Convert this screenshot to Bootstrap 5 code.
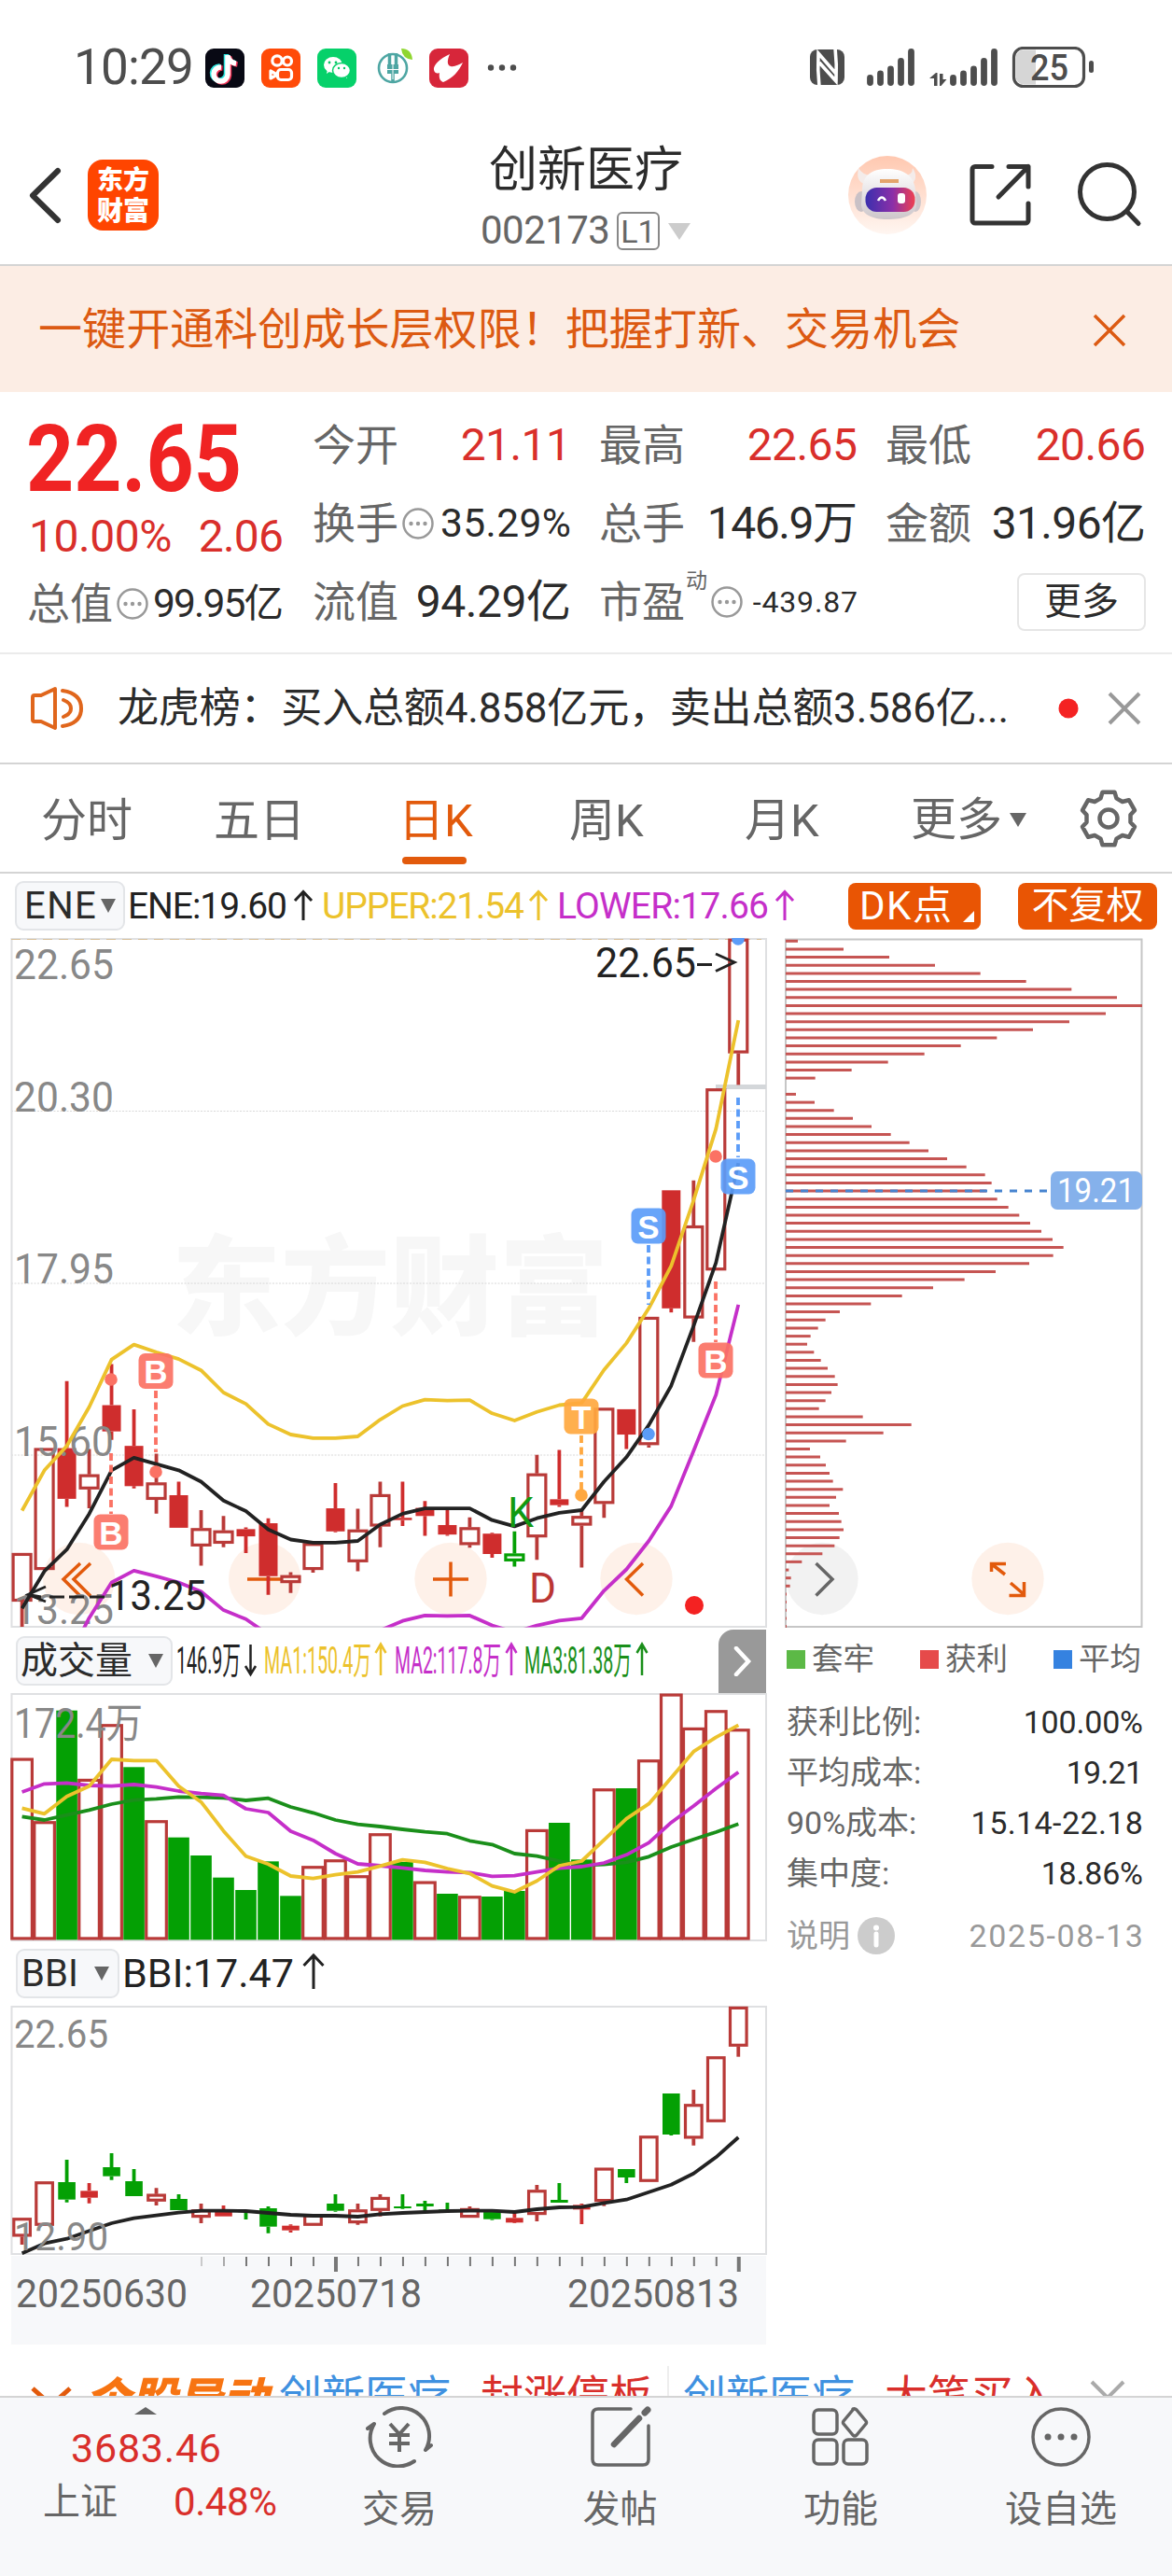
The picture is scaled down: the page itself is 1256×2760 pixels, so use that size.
<!DOCTYPE html>
<html lang="zh-CN">
  <head>
    <meta charset="UTF-8" />
    <meta name="viewport" content="width=device-width, initial-scale=1" />
    <title>创新医疗 002173</title>
    <link
      href="https://cdn.jsdelivr.net/npm/bootstrap@5.3.0/dist/css/bootstrap.min.css"
      rel="stylesheet"
    />
    <style>
      body {
        width: 1256px;
        height: 2760px;
        overflow: hidden;
        background: #fff;
        color: #2b2b2b;
        font-family: Roboto, "Noto Sans CJK SC", sans-serif;
      }
      svg { display: block; flex: none; }
      svg text { font-family: Roboto, "Noto Sans CJK SC", sans-serif; }
      [data-w] { display: inline-block; white-space: nowrap; }
      .gray { color: #666; }
      .up { color: #d92f2b; }

      .statusbar { height: 134px; padding: 12px 84px 0 79px; color: #4d4d4d; }
      .status-apps { margin-right: 312px; }
      .clock { font-size: 53px; }

      .topbar { height: 151px; border-bottom: 2px solid #d4d4d4; }
      .topbar-side { width: 400px; }
      .brand-logo {
        width: 76px; height: 76px; border-radius: 16px; background: #ff4500; color: #fff;
        font: 900 28px/33px "Noto Sans CJK SC", sans-serif; padding-top: 4px;
      }
      .stock-name { font-size: 52px; line-height: 60px; padding-top: 3px; }
      .stock-code { font-size: 42px; line-height: 40px; margin-top: 14px; }
      .level-box {
        width: 46px; height: 41px; border: 2px solid #888; border-radius: 6px;
        font-size: 34px; line-height: 38px; margin-left: 7px;
      }

      .promo { height: 135px; background: #fcede4; color: #dc5a12; padding: 2px 49px 0 41px; font-size: 47px; }

      .quote { height: 281px; border-bottom: 2px solid #ebebeb; padding: 15px 28px 0 29px; }
      .quote-left { width: 276px; margin-right: 31px; }
      .change { font-size: 48px; line-height: 60px; margin-top: 10px; padding-left: 2px; }
      .quote-grid { display: grid; grid-template-columns: 277px 277px 279px; column-gap: 30px; grid-auto-rows: 84px; width: 894px; }
      .cell { display: flex; align-items: center; height: 84px; font-size: 48px; white-space: nowrap; }
      .cell b { font-weight: 400; font-size: 46px; color: #666; }
      .cell span { margin-left: auto; }
      .cell .mid { font-size: 42.5px; }
      .cell .tiny { font-size: 32px; }
      .cell .sup { font-size: 23px; line-height: 40px; margin-left: 1px; }
      .more-btn { width: 138px; height: 62px; border: 2px solid #e6e6e6; border-radius: 8px; font-size: 40px; line-height: 58px; }

      .notice { height: 118px; border-bottom: 2px solid #d4d4d4; padding: 0 32px 0 33px; font-size: 44px; }

      .period-tabs { height: 117px; border-bottom: 2px solid #d4d4d4; color: #666; font-size: 49px; }
      .period-tabs div { padding-top: 3px; line-height: 116px; height: 116px; white-space: nowrap; }
      .period-tabs .current { color: #e25a0c; position: relative; }
      .period-tabs .current::after {
        content: ""; position: absolute; left: 4px; top: 99px; width: 69px; height: 8px; border-radius: 4px; background: #e25a0c;
      }

      .ind-row { height: 69px; padding-left: 16px; }
      .sub-row { height: 69px; padding-left: 17px; }
      .pill {
        height: 53px; border: 2px solid #e3e5e8; border-radius: 9px; background: #f7f8fa;
        font-size: 40px; line-height: 49px; flex: none;
      }
      .fill-btn { height: 50px; border-radius: 8px; background: #e95504; color: #fff; font-size: 40px; line-height: 49px; }
      .kline-col { width: 823px; }
      .cost-col { width: 433px; }
      .next-panel { width: 51px; height: 68px; border-radius: 16px 0 0 0; background: #999; }
      .legend-row { padding: 10px 33px 0 20px; font-size: 33.5px; height: 74px; }
      .legend-row div { height: 46px; }
      .legend-row i { width: 20px; height: 20px; margin-right: 7px; }
      .cost-row { height: 54px; padding: 0 31px 2px 20px; font-size: 34px; }

      .ticker { height: 55px; padding-left: 33px; overflow: hidden; font-size: 46px; line-height: 110px; white-space: nowrap; }
      .ticker-tag { font: italic 900 49px/110px "Noto Sans CJK SC", sans-serif; color: #f77412; }
      .ticker-split { width: 2px; height: 40px; margin-top: 23px; background: #eee; }

      .bottombar { height: 193px; border-top: 2px solid #d4d4d4; background: #f7f8fa; color: #666; font-size: 40px; }
      .index-box { width: 342px; }
      .nav-col { line-height: 50px; flex: none; }
      .nav-col svg { margin: 9px auto 20px; }
    </style>
  </head>
  <body>
    <!-- phone status bar -->
    <div class="statusbar d-flex align-items-center">
      <div class="clock" data-w="125">10:29</div>
      <svg class="ms-auto status-apps" width="336" height="46" viewBox="218 50 336 46">
        <rect x="220" y="52" width="42" height="42" rx="9" fill="#080914" />
        <g fill="none" stroke-width="5.5">
          <path d="M244 59V80a7.5 7.5 0 1 1-7-8M244 60q2 7 9 8" stroke="#2ee5df" transform="translate(-1.5 -1)" />
          <path d="M244 59V80a7.5 7.5 0 1 1-7-8M244 60q2 7 9 8" stroke="#f5365a" transform="translate(1.5 1)" />
          <path d="M244 59V80a7.5 7.5 0 1 1-7-8M244 60q2 7 9 8" stroke="#fff" />
        </g>
        <rect x="280" y="52" width="42" height="42" rx="9" fill="#ff4a08" />
        <g fill="none" stroke="#fff" stroke-width="3.2" stroke-linejoin="round">
          <circle cx="297" cy="65" r="5.2" /><circle cx="308" cy="65.5" r="4.5" />
          <rect x="297.5" y="74.5" width="15" height="11" rx="3.5" />
          <path d="M297 80l-7-4v8z" />
        </g>
        <rect x="340" y="52" width="42" height="42" rx="9" fill="#06d16a" />
        <path d="M350 79l1-5h6zM372 84l-1-5h-6z" fill="#fff" />
        <ellipse cx="357" cy="69.5" rx="10" ry="8.5" fill="#fff" />
        <ellipse cx="366" cy="75.5" rx="9.5" ry="8" fill="#fff" stroke="#06d16a" stroke-width="1.5" />
        <g fill="#06c765"><circle cx="353" cy="67" r="1.4" /><circle cx="360" cy="67" r="1.4" /><circle cx="363" cy="73" r="1.2" /><circle cx="369" cy="73" r="1.2" /></g>
        <circle cx="421" cy="73" r="15" fill="none" stroke="#4ea6a3" stroke-width="2.6" />
        <path d="M417.500 57V69M424.500 57V69M421 69V89" fill="none" stroke="#4ea6a3" stroke-width="3.5" />
        <path d="M415 69h12v10H415zM415 74h12" fill="#4ea6a3" />
        <path d="M421 64V85M415 74.500h12" stroke="#fff" stroke-width="1" />
        <path d="M430 52q11 0 12 12q-11-1-12-12z" fill="#8fd62f" />
        <rect x="460" y="52" width="42" height="42" rx="9" fill="#d7263a" />
        <path d="M482 58C471 63 464 70 465 75c1 4 4 4 6 3-1 6 1 9 4 10 10-4 17-12 21-21-4 2-9 5-13 4-4-1-4-6-1-13z" fill="#fff" />
        <g fill="#4d4d4d"><circle cx="526" cy="72.5" r="3.2" /><circle cx="538" cy="72.5" r="3.2" /><circle cx="550" cy="72.5" r="3.2" /></g>
      </svg>
      <svg width="306" height="46" viewBox="866 50 306 46" fill="#4d4d4d">
        <rect x="868" y="53" width="37" height="38" rx="8" />
        <path d="M878 93q-2-18-1-36l19 22M895 51q2 18 1 36l-18-20" fill="none" stroke="#fff" stroke-width="3.6" />
        <g stroke="#4d4d4d" stroke-width="6.8" stroke-linecap="round">
          <path d="M932.500 83.500V88.500M943.500 79V88.500M954.500 74V88.500M965.500 65.500V88.500M976.500 55.500V88.500" />
          <path d="M1021.500 83.500V88.500M1032.500 79V88.500M1043.500 74V88.500M1054.500 65.500V88.500M1065.500 55.500V88.500" />
        </g>
        <path d="M1001 92V84h-5l7-6h1.500V92zM1007 79h3.500v6h4l-6 7H1007z" />
        <rect x="1086.5" y="51.5" width="75" height="41" rx="10" fill="#fff" stroke="#4d4d4d" stroke-width="3.2" />
        <path d="M1110 53.500h-13a8.500 8.500 0 0 0-8.500 8.500v20a8.500 8.500 0 0 0 8.500 8.500h13z" fill="#d6d6d6" />
        <rect x="1167" y="65" width="5" height="13" rx="2.5" />
        <text x="1104" y="86" font-size="38" font-weight="500" textLength="41" lengthAdjust="spacingAndGlyphs">25</text>
      </svg>
    </div>

    <!-- title bar -->
    <div class="topbar d-flex">
      <div class="topbar-side d-flex align-items-center">
        <svg width="94" height="70" viewBox="0 174 94 70"><path d="M62 183L35 209.500L62 236" fill="none" stroke="#333" stroke-width="6" stroke-linecap="round" stroke-linejoin="round" /></svg>
        <div class="brand-logo text-center">东方<br />财富</div>
      </div>
      <div class="flex-fill text-center pt-3">
        <div class="stock-name">创新医疗</div>
        <div class="stock-code gray d-flex justify-content-center">
          <span data-w="136">002173</span>
          <div class="level-box">L1</div>
          <svg width="26" height="18" class="align-self-center ms-2"><path d="M1 0H25L13 18z" fill="#ccc" /></svg>
        </div>
      </div>
      <div class="topbar-side d-flex align-items-center">
        <svg width="400" height="100" viewBox="856 159 400 100">
          <defs>
            <linearGradient id="halo" x1="0" y1="0" x2="0" y2="1"><stop offset="0" stop-color="#ffc8b0" /><stop offset="1" stop-color="#fff6f1" /></linearGradient>
            <linearGradient id="visor"><stop offset="0" stop-color="#3a2fae" /><stop offset=".55" stop-color="#8b2fa8" /><stop offset="1" stop-color="#ef4050" /></linearGradient>
            <linearGradient id="shell" x1="0" y1="0" x2="0" y2="1"><stop offset="0" stop-color="#fff" /><stop offset="1" stop-color="#cdc6ca" /></linearGradient>
          </defs>
          <circle cx="951" cy="209" r="42" fill="url(#halo)" />
          <path d="M931 198q-15-1-11-18q4 7 13 8zM969 188q9 0 9-8q8 12-4 20z" fill="#f4ecea" />
          <ellipse cx="923" cy="216" rx="7" ry="11" fill="#c9c1c6" /><ellipse cx="981" cy="216" rx="6" ry="11" fill="#cec7cb" />
          <path d="M924 204c0-16 10-23 27-23s29 7 30 23l1 15c0 12-14 16-31 16s-28-6-28-16z" fill="url(#shell)" />
          <rect x="927.5" y="201" width="53" height="26" rx="12" fill="url(#visor)" />
          <path d="M941 215q4-7 8 0" fill="none" stroke="#fff" stroke-width="2.5" />
          <rect x="962" y="207" width="8" height="11" rx="3" fill="#fff" />
          <path d="M943 194h20" stroke="#e3a46c" stroke-width="4" />
          <g fill="none" stroke="#333" stroke-width="5" stroke-linecap="round" stroke-linejoin="round">
            <path d="M1063 178.500H1045a3 3 0 0 0-3 3V236a3 3 0 0 0 3 3H1099a3 3 0 0 0 3-3V218M1081 178.500H1102V200M1102 178.500L1070 211" />
            <circle cx="1186.5" cy="205.5" r="29" /><path d="M1208 227L1220 239.500" />
          </g>
        </svg>
      </div>
    </div>

    <div class="promo d-flex align-items-center justify-content-between">
      <span data-w="985">一键开通科创成长层权限！把握打新、交易机会</span>
      <svg width="36" height="36"><path d="M2 2L34 34M34 2L2 34" stroke="#dc5a12" stroke-width="3.5" /></svg>
    </div>

    <!-- quote summary -->
    <div class="quote d-flex">
      <div class="quote-left">
        <svg width="240" height="100" viewBox="29 435 240 100">
          <text x="28" y="526" font-size="100" font-weight="700" fill="#f02323" textLength="231" lengthAdjust="spacingAndGlyphs">22.65</text>
        </svg>
        <div class="change up d-flex justify-content-between"><span data-w="150">10.00%</span><span data-w="88">2.06</span></div>
        <div class="cell">
          <b>总值</b>
          <svg class="ms-1" width="34" height="34"><use href="#dots" /></svg>
          <span class="mid" data-w="137">99.95亿</span>
        </div>
      </div>
      <div class="quote-grid">
        <div class="cell"><b>今开</b><span class="up" data-w="115">21.11</span></div>
        <div class="cell"><b>最高</b><span class="up" data-w="115">22.65</span></div>
        <div class="cell"><b>最低</b><span class="up" data-w="115">20.66</span></div>
        <div class="cell">
          <b>换手</b>
          <svg class="ms-1" width="34" height="34" id="dots"><g fill="#999"><circle cx="17" cy="17" r="15.5" fill="none" stroke="#999" stroke-width="2.5" /><circle cx="9.5" cy="17" r="2.2" /><circle cx="17" cy="17" r="2.2" /><circle cx="24.5" cy="17" r="2.2" /></g></svg>
          <span class="mid" data-w="137">35.29%</span>
        </div>
        <div class="cell"><b>总手</b><span data-w="158">146.9万</span></div>
        <div class="cell"><b>金额</b><span data-w="162">31.96亿</span></div>
        <div class="cell"><b>流值</b><span data-w="163">94.29亿</span></div>
        <div class="cell">
          <b>市盈</b>
          <div class="sup gray align-self-start">动</div>
          <svg class="ms-1" width="34" height="34"><use href="#dots" /></svg>
          <span class="tiny" data-w="110">-439.87</span>
        </div>
        <div class="cell justify-content-end"><div class="more-btn text-center">更多</div></div>
      </div>
    </div>

    <div class="notice d-flex align-items-center">
      <svg width="58" height="48" viewBox="33 735 58 48" fill="none" stroke="#e0661c" stroke-width="4" stroke-linecap="round" stroke-linejoin="round">
        <path d="M35 747V771q0 2 2 2h7L59 780V738L44 745H37q-2 0-2 2zM67 740q20 3 20 19t-20 19M68 750q8 3 8 9t-8 9" />
      </svg>
      <span data-w="952" style="margin-left: 35px">龙虎榜：买入总额4.858亿元，卖出总额3.586亿...</span>
      <svg class="ms-auto" width="90" height="40" viewBox="1134 739 90 40">
        <circle cx="1145" cy="759" r="10.5" fill="#f42222" />
        <path d="M1189 743L1221 775M1221 743L1189 775" stroke="#999" stroke-width="4" />
      </svg>
    </div>

    <!-- period tabs -->
    <div class="period-tabs d-flex">
      <div style="margin-left: 44px; width: 185px">分时</div>
      <div style="width: 198px">五日</div>
      <div class="current" style="width: 183px">日K</div>
      <div style="width: 188px">周K</div>
      <div style="width: 178px">月K</div>
      <div class="d-flex align-items-center">更多<svg class="ms-2" width="18" height="15"><path d="M0 0H18L9 15z" fill="#666" /></svg></div>
      <svg class="align-self-center" style="margin-left: 56px" width="64" height="64" viewBox="-32 -32 64 64" fill="none" stroke="#666" stroke-width="4.5" stroke-linejoin="round">
        <path d="M-6.500-28.300L6.500-28.300L8.500-21.600L14.800-18L21.800-19.800L28-8.800L23.500-4L23.500 4L28 8.800L21.800 19.800L14.800 18L8.500 21.600L6.500 28.300L-6.500 28.300L-8.500 21.600L-14.800 18L-21.800 19.800L-28 8.800L-23.500 4L-23.500-4L-28-8.800L-21.800-19.800L-14.800-18L-8.500-21.600z" />
        <circle r="9.5" />
      </svg>
    </div>

    <!-- ENE indicator -->
    <div class="ind-row d-flex align-items-center">
      <div class="pill d-flex align-items-center" style="width: 118px; padding-left: 8px">
        <span data-w="74">ENE</span>
        <svg style="margin-left: 5px" width="16" height="15"><path d="M0 0H16L8 15z" fill="#666" /></svg>
      </div>
      <svg width="730" height="53" viewBox="134 944 730 53" font-size="39">
        <text x="137" y="984" fill="#222" textLength="171">ENE:19.60</text>
        <text x="345" y="984" fill="#ecc22c" textLength="217">UPPER:21.54</text>
        <text x="597" y="984" fill="#c52fc9" textLength="227">LOWER:17.66</text>
        <g fill="none" stroke-width="3">
          <path d="M325 986V956M316 965L325 955.500L334 965" stroke="#222" />
          <path d="M577 986V956M568 965L577 955.500L586 965" stroke="#ecc22c" />
          <path d="M841 986V956M832 965L841 955.500L850 965" stroke="#c52fc9" />
        </g>
      </svg>
      <div class="fill-btn d-flex" style="margin-left: 45px; width: 142px; padding-left: 12px">
        <span data-w="96" style="font-size: 42px">DK点</span>
        <svg class="mt-auto mb-2 ms-auto" style="margin-right: 7px" width="12" height="12"><path d="M12 0V12H0z" fill="#fff" /></svg>
      </div>
      <div class="fill-btn text-center" style="margin-left: 40px; width: 149px">不复权</div>
    </div>

    <div class="d-flex">
      <div class="kline-col">
        <svg id="kline" width="822" height="740" viewBox="0 1005 822 740"></svg>

        <div class="sub-row d-flex align-items-center">
          <div class="pill d-flex align-items-center" style="width: 168px; padding-left: 3px">
            <span>成交量</span>
            <svg style="margin-left: 17px" width="16" height="15"><path d="M0 0H16L8 15z" fill="#666" /></svg>
          </div>
          <svg width="585" height="53" viewBox="185 1753 585 53" font-size="40">
            <text x="189" y="1793" fill="#222" textLength="69" lengthAdjust="spacingAndGlyphs">146.9万</text>
            <text x="283" y="1793" fill="#ecc22c" textLength="115" lengthAdjust="spacingAndGlyphs">MA1:150.4万</text>
            <text x="423" y="1793" fill="#c52fc9" textLength="114" lengthAdjust="spacingAndGlyphs">MA2:117.8万</text>
            <text x="562" y="1793" fill="#1a8f1a" textLength="115" lengthAdjust="spacingAndGlyphs">MA3:81.38万</text>
            <g fill="none" stroke-width="2.5">
              <path d="M268.500 1762V1794M263 1785L268.500 1794L274 1785" stroke="#222" />
              <path d="M408 1795V1762M402.500 1771L408 1761.500L413.500 1771" stroke="#ecc22c" />
              <path d="M548 1795V1762M542.500 1771L548 1761.500L553.500 1771" stroke="#c52fc9" />
              <path d="M688 1795V1762M682.500 1771L688 1761.500L693.500 1771" stroke="#1a8f1a" />
            </g>
          </svg>
          <div class="next-panel d-flex justify-content-center align-items-center">
            <svg width="20" height="32"><path d="M3 2L16 16L3 30" fill="none" stroke="#fff" stroke-width="4.5" stroke-linecap="round" /></svg>
          </div>
        </div>

        <svg id="volume" width="822" height="266" viewBox="0 1814 822 266"></svg>

        <div class="sub-row d-flex align-items-center">
          <div class="pill d-flex align-items-center" style="width: 111px; padding-left: 4px">
            <span data-w="58">BBI</span>
            <svg style="margin-left: 17px" width="16" height="15"><path d="M0 0H16L8 15z" fill="#666" /></svg>
          </div>
          <svg width="300" height="53" viewBox="128 2089 300 53">
            <text x="131" y="2130" font-size="42" fill="#222" textLength="184" lengthAdjust="spacingAndGlyphs">BBI:17.47</text>
            <path d="M336 2132V2097M325.500 2107L336 2096L346.500 2107" fill="none" stroke="#222" stroke-width="3" />
          </svg>
        </div>

        <svg id="bbi" width="822" height="363" viewBox="0 2149 822 363"></svg>
      </div>

      <!-- cost distribution -->
      <div class="cost-col">
        <svg id="cost" width="433" height="740" viewBox="823 1005 433 740"></svg>
        <div class="legend-row gray d-flex justify-content-between">
          <div class="d-flex align-items-center"><i style="background: #5cb946"></i>套牢</div>
          <div class="d-flex align-items-center"><i style="background: #e64a4a"></i>获利</div>
          <div class="d-flex align-items-center"><i style="background: #3582e0"></i>平均</div>
        </div>
        <div class="cost-row d-flex align-items-center justify-content-between"><span class="gray">获利比例:</span><span data-w="126">100.00%</span></div>
        <div class="cost-row d-flex align-items-center justify-content-between"><span class="gray">平均成本:</span><span data-w="80">19.21</span></div>
        <div class="cost-row d-flex align-items-center justify-content-between"><span class="gray">90%成本:</span><span data-w="182">15.14-22.18</span></div>
        <div class="cost-row d-flex align-items-center justify-content-between"><span class="gray">集中度:</span><span data-w="107">18.86%</span></div>
        <div class="cost-row d-flex align-items-center" style="margin-top: 13px; color: #999">
          <span>说明</span>
          <svg class="ms-2" width="40" height="40"><circle cx="20" cy="20" r="20" fill="#ccc" /><circle cx="20" cy="11.5" r="3" fill="#fff" /><path d="M20 18V30" stroke="#fff" stroke-width="5" stroke-linecap="round" /></svg>
          <span class="ms-auto" data-w="184">2025-08-13</span>
        </div>
      </div>
    </div>

    <!-- event ticker, cut off by the bottom bar -->
    <div class="ticker d-flex">
      <svg style="margin-top: 45px" width="44" height="40"><path d="M2 2L22 20L42 2" fill="none" stroke="#e25a0c" stroke-width="5" /></svg>
      <span class="ticker-tag" style="margin-left: 14px">个股异动</span>
      <span style="margin-left: 12px; color: #3f91e0">创新医疗</span>
      <span class="up" style="margin-left: 32px">封涨停板</span>
      <div class="ticker-split" style="margin-left: 16px"></div>
      <span style="margin-left: 15px; color: #3f91e0">创新医疗</span>
      <span class="up" style="margin-left: 32px">大笔买入</span>
      <svg style="margin: 38px 0 0 36px" width="38" height="38"><path d="M2 2L36 36M36 2L2 36" stroke="#aaa" stroke-width="4" /></svg>
    </div>

    <div class="bottombar d-flex">
      <div class="index-box">
        <svg style="margin: 10px 0 0 144px" width="24" height="8"><path d="M0 8L12 0L24 8z" fill="#666" /></svg>
        <div class="up" style="font-size: 43px; line-height: 50px; margin: 11px 0 0 76px"><span data-w="158">3683.46</span></div>
        <div class="d-flex" style="margin: 8px 0 0 46px; line-height: 50px">
          <span>上证</span><span class="up" style="margin-left: 60px; font-size: 42px" data-w="108">0.48%</span>
        </div>
      </div>
      <div class="nav-col text-center" style="width: 172px">
        <svg width="76" height="66" viewBox="-38 -33 76 66" fill="none" stroke="#666" stroke-width="4" stroke-linecap="round" stroke-linejoin="round">
          <path d="M-16-25A30 30 0 0 1 28 14L34 9M16 26A30 30 0 0 1-27-14L-34-9" />
          <path d="M-10-14L0-3L10-14M-11-2H11M-11 7H11M0-3V16" stroke-linecap="butt" />
        </svg>
        交易
      </div>
      <div class="nav-col text-center" style="width: 301px">
        <svg width="66" height="66" viewBox="-33 -33 66 66" fill="none" stroke="#666" stroke-width="3.5" stroke-linecap="round">
          <path d="M11-30H-24q-6 0-6 6V24q0 6 6 6H24q6 0 6-6V-12" />
          <path d="M-7 8L20-20" stroke-width="6.5" /><path d="M26-26L29-29" stroke-width="7" />
        </svg>
        发帖
      </div>
      <div class="nav-col text-center" style="width: 172px">
        <svg width="66" height="66" viewBox="-33 -33 66 66" fill="none" stroke="#666" stroke-width="3.5" stroke-linejoin="round">
          <rect x="-29" y="-29" width="25" height="26" rx="5" /><rect x="-29" y="3" width="25" height="26" rx="5" /><rect x="3" y="3" width="25" height="26" rx="5" />
          <path d="M14-30q2-1 4 1l10 12q1 2 0 3l-10 12q-2 2-4 0l-10-12q-1-1 0-3l10-12z" transform="translate(-1 0)" />
        </svg>
        功能
      </div>
      <div class="nav-col text-center ms-auto" style="width: 238px">
        <svg width="66" height="66" viewBox="-33 -33 66 66" fill="#666">
          <circle r="30" fill="none" stroke="#666" stroke-width="3.5" /><circle cx="-14" r="3.5" /><circle r="3.5" /><circle cx="14" r="3.5" />
        </svg>
        设自选
      </div>
    </div>

    <script>
      const RED = "#b93a38", FILL = "#cf2d2d", GREEN = "#04a004";
      const STEP = 23.99, X0 = 23.6;
      const cx = (i) => X0 + i * STEP;
      const line = (values, y, color, width = 3.8) =>
        `<polyline fill="none" stroke="${color}" stroke-width="${width}" stroke-linejoin="round" points="${values
          .map((v, i) => cx(i).toFixed(1) + "," + y(v).toFixed(1))
          .join(" ")}"/>`;
      const label = (x, y, s, w, color = "#888", size = 44) =>
        `<text x="${x}" y="${y}" fill="${color}" font-size="${size}" textLength="${w}" lengthAdjust="spacingAndGlyphs">${s}</text>`;

      // rows are [kind, bodyTop, bodyBottom, wickTop, wickBottom]; h = hollow, r = red, g = green, k = hollow green
      function candles(rows, y, half) {
        return rows
          .map(([kind, a, b, hi = a, lo = b], i) => {
            const x = cx(i);
            const color = kind === "g" || kind === "k" ? GREEN : kind === "r" ? FILL : RED;
            const hollow = kind === "h" || kind === "k";
            const top = y(a), h = Math.max(y(b) - top, 2);
            const wick = `<path d="M${x} ${y(hi)}V${top}M${x} ${top + h}V${y(lo)}" stroke="${color}" stroke-width="3.8"/>`;
            const body = hollow
              ? `<rect x="${x - half + 1.5}" y="${top + 1.4}" width="${half * 2 - 3}" height="${Math.max(h - 2.8, 1)}" fill="none" stroke="${color}" stroke-width="3.2"/>`
              : `<rect x="${x - half + 1}" y="${top}" width="${half * 2 - 2}" height="${h}" fill="${color}"/>`;
            return wick + body;
          })
          .join("");
      }

      // main K line
      const ky = (v) => 1000 + v * 0.4847;
      const days = [
        ["h", 1370, 1477, 1370, 1533], ["h", 1138, 1407], ["r", 1138, 1250, 990, 1268], ["h", 1196, 1229, 1140, 1271],
        ["r", 1043, 1101, 952, 1120], ["r", 1133, 1222, 1052, 1227], ["h", 1214, 1252, 1150, 1283], ["r", 1242, 1314, 1212, 1314],
        ["h", 1315, 1355, 1275, 1398], ["h", 1320, 1349, 1288, 1357], ["r", 1317, 1333, 1313, 1370], ["r", 1304, 1421, 1293, 1462],
        ["h", 1419, 1436, 1412, 1458], ["h", 1348, 1407, 1343, 1413], ["r", 1271, 1322, 1215, 1324], ["h", 1318, 1390, 1272, 1410],
        ["h", 1240, 1311, 1212, 1357], ["r", 1292, 1297, 1212, 1310], ["r", 1270, 1288, 1255, 1332], ["r", 1308, 1329, 1272, 1332],
        ["h", 1313, 1352, 1291, 1358], ["r", 1327, 1372, 1325, 1380], ["k", 1371, 1388, 1322, 1400], ["h", 1194, 1335, 1153, 1385],
        ["r", 1251, 1264, 1142, 1268], ["h", 1288, 1309, 1275, 1402], ["h", 1049, 1261, 1049, 1292], ["r", 1052, 1108, 1052, 1140],
        ["h", 848, 1131, 848, 1137], ["r", 568, 829, 568, 838], ["h", 646, 851, 546, 903], ["h", 343, 745], ["h", 12, 265, 12, 335],
      ];
      const ene = [1492, 1410, 1362, 1283, 1187, 1159, 1173, 1187, 1212, 1254, 1277, 1318, 1340, 1347, 1347, 1343, 1307, 1283, 1271, 1271, 1271, 1297, 1311, 1293, 1281, 1275, 1212, 1158, 1087, 1000, 868, 728, 508];
      const upper = [1276, 1187, 1133, 1047, 942, 909, 926, 941, 966, 1015, 1040, 1085, 1108, 1116, 1116, 1112, 1075, 1045, 1031, 1033, 1032, 1061, 1077, 1058, 1043, 1038, 965, 906, 829, 735, 590, 432, 192];
      const lower = [1740, 1660, 1610, 1513, 1435, 1409, 1421, 1435, 1455, 1496, 1516, 1550, 1570, 1580, 1580, 1575, 1541, 1520, 1508, 1509, 1508, 1530, 1545, 1530, 1519, 1514, 1453, 1406, 1343, 1266, 1144, 1020, 821];

      const dash = (x, a, b, color) => `<path d="M${x} ${a}V${b}" stroke="${color}" stroke-width="3.8" stroke-dasharray="8 4.500"/>`;
      const dot = (x, y, color, r = 6.8) => `<circle cx="${x}" cy="${y}" r="${r}" fill="${color}"/>`;
      const mark = (x, y, s, color) =>
        `<rect x="${x - 18.5}" y="${y - 19}" width="37" height="38" rx="7" fill="${color}" fill-opacity=".92"/>` +
        `<text x="${x}" y="${y + 13}" text-anchor="middle" font-size="35" font-weight="700" fill="#fff" style="font-family:'Liberation Sans'">${s}</text>`;
      const round = (x, icon, bg = "#feede3", color = "#e25a0c") =>
        `<circle cx="${x}" cy="1691.500" r="38.700" fill="${bg}" fill-opacity=".8"/><path d="${icon}" fill="none" stroke="${color}" stroke-width="3.500"/>`;
      const CORAL = "#fb7264", BLUE = "#5b9cf8", AMBER = "#ffa83f";

      document.getElementById("kline").innerHTML =
        `<text x="184" y="1421" font-size="116" font-weight="900" fill="#f7f7f7" textLength="468" lengthAdjust="spacingAndGlyphs">东方财富</text>
        <path d="M12 1190.500H821M12 1375H821M12 1559H821" stroke="#d8d8d8" stroke-dasharray="2 1.500"/>
        <rect x="12.500" y="1006" width="808.500" height="737" fill="none" stroke="#dfe0e2" stroke-width="2"/>
        <path d="M12 1006.500H816" stroke="#d8c09a" stroke-dasharray="10 7"/>` +
        round(84.6, "M86 1675L68 1692L86 1710M97 1675L79 1692L97 1710") +
        round(283.7, "M265 1692H303") +
        round(483, "M464 1692H502M483 1673.500V1710.500") +
        round(682, "M689 1675L671.500 1692L689 1709.500") +
        `<path d="M767 1164.500H821" stroke="#d4d7da" stroke-width="5"/>
        <clipPath id="plot"><rect x="12" y="1005" width="810" height="738.500"/></clipPath><g clip-path="url(#plot)">` +
        candles(days, ky, 11) +
        label(15, 1049, "22.65", 107) + label(15, 1191, "20.30", 107) + label(15, 1375, "17.95", 107) + label(15, 1560, "15.60", 107) + label(15, 1740, "13.25", 107) +
        line(upper, ky, "#ecc22c") + line(ene, ky, "#222") + line(lower, ky, "#c52fc9") +
        `<path d="M49 1700L30 1708.500L49 1716M30 1708.500L44 1711M53 1711H69M74 1711H90M96 1711H112" fill="none" stroke="#222" stroke-width="2.800"/>` +
        label(116, 1724.5, "13.25", 105, "#222") + label(638, 1047, "22.65", 108, "#222") +
        `<path d="M747 1033.500H763M767 1022L787 1031L767 1040.500" fill="none" stroke="#222" stroke-width="3"/>` +
        label(544, 1636, "K", 28, "#119a11", 45) + label(567, 1717, "D", 29, "#bb3634", 45) +
        dash(167, 1490, 1556, CORAL) + dash(119, 1557, 1622, CORAL) + dash(767, 1373, 1438, CORAL) +
        dash(623, 1538, 1596, AMBER) + dash(695, 1334, 1398, BLUE) + dash(791, 1176, 1240, BLUE) +
        dot(119, 1478, CORAL) + dot(167, 1577, CORAL) + dot(767, 1239, CORAL) + dot(695, 1536.5, BLUE) + dot(791, 1006, BLUE) + dot(623, 1602, AMBER) +
        mark(167, 1469, "B", CORAL) + mark(119, 1641.5, "B", CORAL) + mark(767, 1457.5, "B", CORAL) +
        mark(695, 1313.5, "S", BLUE) + mark(791, 1260.5, "S", BLUE) + mark(623, 1517.5, "T", AMBER) +
        dot(744, 1720, "#f42222", 10) + "</g>";

      // volume
      const vy = (v) => 1740 + v / 3;
      const vol = [
        ["h", 431], ["h", 634], ["g", 278], ["h", 498], ["h", 322], ["g", 460], ["h", 631], ["g", 686], ["g", 744], ["g", 815], ["g", 855],
        ["g", 763], ["g", 874], ["h", 778], ["h", 757], ["h", 808], ["h", 673], ["g", 765], ["h", 827], ["g", 867], ["h", 874], ["g", 876],
        ["g", 858], ["h", 660], ["g", 639], ["g", 757], ["h", 529], ["g", 528], ["h", 436], ["h", 224], ["h", 333], ["h", 277], ["h", 337],
      ].map(([kind, top]) => [kind, top, 1015]);
      const ma1 = [592, 610, 554, 521, 435, 439, 439, 521, 572, 665, 746, 772, 810, 818, 806, 797, 778, 758, 766, 786, 802, 842, 861, 826, 777, 762, 694, 626, 578, 494, 410, 364, 325];
      const ma2 = [540, 514, 511, 519, 521, 516, 524, 537, 545, 551, 594, 606, 666, 695, 738, 771, 777, 784, 792, 797, 799, 811, 809, 797, 785, 780, 768, 742, 703, 638, 585, 529, 476];
      const ma3 = [619, 630, 614, 598, 579, 566, 562, 556, 557, 559, 567, 560, 588, 607, 630, 644, 651, 660, 668, 674, 697, 709, 738, 746, 762, 776, 773, 766, 748, 717, 692, 669, 643];
      document.getElementById("volume").innerHTML =
        `<rect x="12.500" y="1815" width="808.500" height="264" fill="none" stroke="#dfe0e2" stroke-width="2"/>` +
        candles(vol, vy, 12.3) + label(15, 1862, "172.4万", 138) +
        line(ma3, vy, "#1a8f1a") + line(ma2, vy, "#c52fc9") + line(ma1, vy, "#ecc22c");

      // BBI
      const by = (v) => 2080 + v / 3;
      const bars = [
        ["h", 889, 949, 889, 975], ["h", 772, 914], ["g", 774, 830, 702, 839], ["r", 802, 824, 777, 842], ["g", 726, 755, 681, 767],
        ["g", 771, 819, 732, 819], ["h", 812, 836, 793, 849], ["g", 828, 864, 813, 864], ["h", 862, 888, 843, 906], ["r", 866, 884, 849, 884],
        ["g", 864, 870, 864, 894], ["g", 858, 917, 852, 938], ["r", 914, 929, 910, 936], ["h", 878, 914], ["g", 843, 866, 813, 869],
        ["h", 862, 906, 843, 911], ["h", 822, 866, 813, 884], ["g", 852, 856, 813, 860], ["g", 843, 852, 834, 873], ["g", 862, 869, 840, 872],
        ["h", 858, 888, 852, 888], ["g", 870, 893, 870, 896], ["r", 889, 904, 870, 906], ["h", 799, 879, 783, 900], ["g", 831, 840, 777, 840],
        ["r", 847, 862, 843, 909], ["h", 728, 837, 728, 851], ["g", 732, 759, 732, 777], ["h", 625, 773], ["g", 489, 621, 489, 624],
        ["h", 523, 634, 477, 656], ["h", 370, 581], ["h", 210, 338, 210, 371],
      ];
      const bbi = [1003, 971, 956, 931, 906, 890, 881, 872, 866, 866, 867, 873, 879, 882, 882, 885, 877, 873, 870, 867, 866, 866, 870, 861, 855, 854, 841, 830, 806, 782, 746, 694, 630];
      let ticks = "";
      for (let i = 8; i < 33; i++) {
        const big = i === 14 || i === 32;
        ticks += `<path d="M${cx(i) + 0.5} 2418V${big ? 2434 : 2428}" stroke="#777" stroke-width="${big ? 4 : 2}" opacity="${i === 8 ? 0.35 : i === 9 ? 0.6 : 1}"/>`;
      }
      document.getElementById("bbi").innerHTML =
        `<rect x="12" y="2417" width="809" height="95" fill="#f7f8fa"/>
        <rect x="12.500" y="2150" width="808.500" height="265" fill="none" stroke="#dfe0e2" stroke-width="2"/>` +
        candles(bars, by, 10.3) + line(bbi, by, "#222") + label(15, 2194, "22.65", 101, "#888", 42) + label(15, 2411, "12.90", 101, "#888", 42) +
        ticks + label(17, 2472, "20250630", 184, "#666", 42) + label(268, 2472, "20250718", 184, "#666", 42) + label(608, 2472, "20250813", 184, "#666", 42);

      // cost distribution, one value per price level
      const levels = [
        39, 186, 333, 480, 626, 773, 919, 1065, 1146, 1029, 912, 795, 679, 563, 446, 329, 212, 95, 0, 33, 93, 155, 216, 276, 338, 398, 459, 519, 581, 641,
        662, 645, 680, 716, 751, 786, 822, 858, 893, 860, 783, 675, 575, 474, 374, 274, 174, 128, 104, 80, 69, 91, 113, 135, 158, 167, 147, 128, 107, 248,
        404, 314, 194, 78, 111, 129, 141, 152, 184, 162, 141, 171, 179, 186, 173, 157, 118, 52, 10, 17, 14, 3, 3, 3, 3, 3,
      ];
      document.getElementById("cost").innerHTML =
        `<rect x="842" y="1006.500" width="381.500" height="736.500" fill="none" stroke="#c6c6c6" stroke-width="2"/>` +
        round(881, "M874.500 1675L892 1692L874.500 1709.500", "#efefef", "#666") +
        round(1080, "M1062.500 1684V1675.500H1078M1063 1676L1077 1687M1083 1696L1097 1708M1081.500 1709.500H1097.500V1695") +
        levels.map((v, i) => (v ? `<path d="M842 ${(1008.3 + i * 8.638).toFixed(1)}h${v / 3}" stroke="#c65553" stroke-width="3"/>` : "")).join("") +
        `<path d="M842 1276H1122" stroke="#4683cf" stroke-width="3" stroke-dasharray="8 8"/>
        <rect x="1126" y="1255" width="98" height="41" rx="7" fill="#85b1eb"/>` + label(1133, 1288, "19.21", 83, "#fff", 37);

      document.querySelectorAll("[data-w]").forEach((el) => {
        const size = parseFloat(getComputedStyle(el).fontSize);
        const gap = (Number(el.dataset.w) + size * 0.07 - el.getBoundingClientRect().width) / (el.textContent.length - 1);
        el.style.letterSpacing = gap + "px";
        el.style.marginRight = -gap + "px";
      });
    </script>
    <script src="https://cdn.jsdelivr.net/npm/bootstrap@5.3.0/dist/js/bootstrap.bundle.min.js"></script>
  </body>
</html>
